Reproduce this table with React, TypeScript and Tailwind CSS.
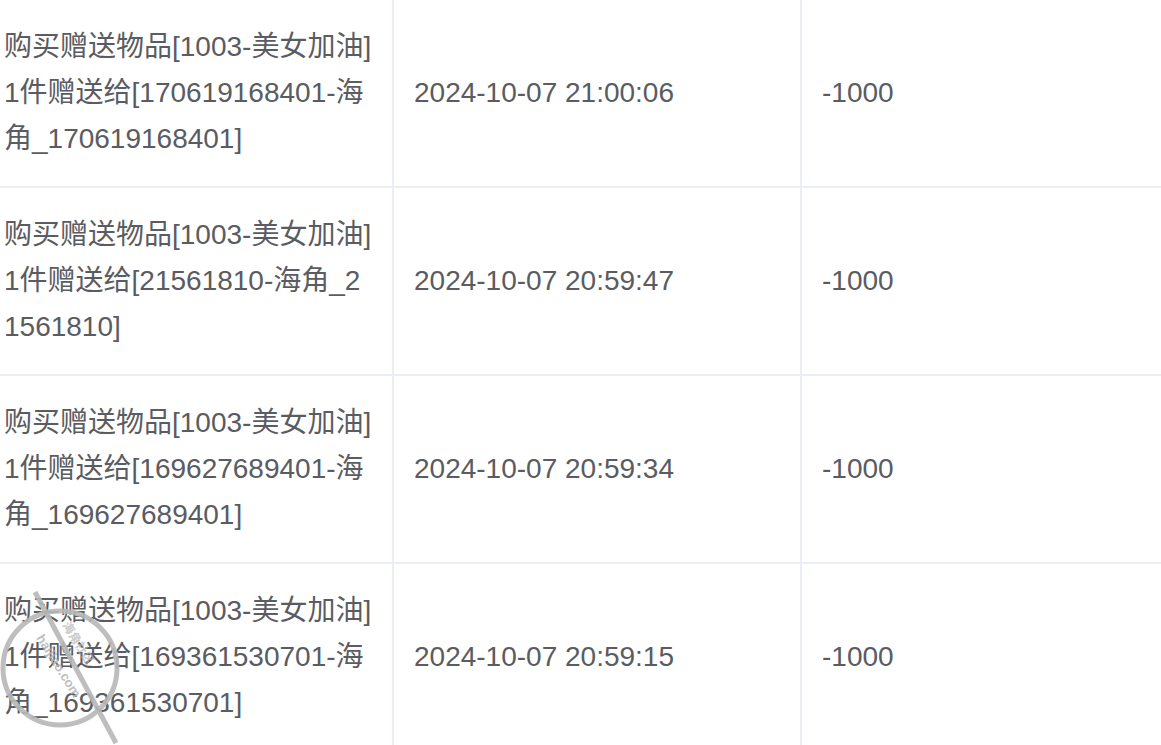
const rows = [
  {
    desc: "购买赠送物品[1003-美女加油]1件赠送给[170619168401-海角_170619168401]",
    time: "2024-10-07 21:00:06",
    amount: "-1000",
  },
  {
    desc: "购买赠送物品[1003-美女加油]1件赠送给[21561810-海角_21561810]",
    time: "2024-10-07 20:59:47",
    amount: "-1000",
  },
  {
    desc: "购买赠送物品[1003-美女加油]1件赠送给[169627689401-海角_169627689401]",
    time: "2024-10-07 20:59:34",
    amount: "-1000",
  },
  {
    desc: "购买赠送物品[1003-美女加油]1件赠送给[169361530701-海角_169361530701]",
    time: "2024-10-07 20:59:15",
    amount: "-1000",
  },
];

function Watermark() {
  return (
    <svg
      className="pointer-events-none absolute left-0 top-[580px]"
      width="160"
      height="165"
      viewBox="0 0 160 165"
    >
      <g fill="none" stroke="#b8b8b8" strokeWidth="5" opacity="0.9">
        <circle cx="60" cy="88" r="57" />
        <line x1="35" y1="12" x2="116" y2="163" />
      </g>
      <g transform="translate(36 58) rotate(58)" fill="#b4b4b4" opacity="0.85">
        <text x="0" y="0" fontSize="13" fontFamily="'Liberation Sans', sans-serif" fontWeight="bold">
          haijiao.com
        </text>
      </g>
      <g transform="translate(62 45) rotate(58)" fill="#b4b4b4" opacity="0.7">
        <text x="0" y="0" fontSize="12" fontFamily="'Noto Sans CJK SC', sans-serif" fontWeight="bold">
          海角社区
        </text>
      </g>
    </svg>
  );
}

export default function App() {
  return (
    <div
      className="relative h-[745px] w-[1161px] overflow-hidden bg-white text-[28px] leading-[46px] text-[#5a5c61]"
      style={{ fontFamily: "'Liberation Sans', Arial, 'Noto Sans CJK SC', sans-serif" }}
    >
      <div className="ml-[-16px] flex flex-col">
        {rows.map((r, i) => (
          <div key={i} className="flex h-[188px] border-b-2 border-[#ebeef5]">
            <div className="flex w-[410px] shrink-0 items-center border-r-2 border-[#ebeef5] pl-[20px] pr-[19px]">
              <div className="break-all">{r.desc}</div>
            </div>
            <div className="flex w-[408px] shrink-0 items-center border-r-2 border-[#ebeef5] px-[20px]">
              {r.time}
            </div>
            <div className="flex flex-1 items-center px-[20px]">{r.amount}</div>
          </div>
        ))}
      </div>
      <Watermark />
    </div>
  );
}
